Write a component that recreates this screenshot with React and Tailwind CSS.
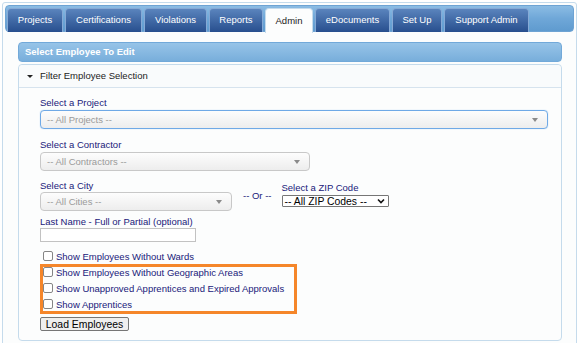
import React from 'react';

const tabs = [
  { label: 'Projects', w: 'w-[56px]' },
  { label: 'Certifications', w: 'w-[77px]' },
  { label: 'Violations', w: 'w-[63px]' },
  { label: 'Reports', w: 'w-[54px]' },
  { label: 'Admin', w: 'w-[48px]', active: true },
  { label: 'eDocuments', w: 'w-[75px]' },
  { label: 'Set Up', w: 'w-[50px]' },
  { label: 'Support Admin', w: 'w-[85px]' },
];

const Arrow = () => (
  <span className="w-0 h-0 border-l-[3px] border-r-[3px] border-t-[4px] border-l-transparent border-r-transparent border-t-[#8a8a8a]" />
);

const MenuSelect = ({ text, w, focused }) => (
  <div
    className={`${w} h-[19px] flex items-center justify-between pl-[6px] pr-[9px] rounded-[4px] border bg-linear-to-b from-[#fdfdfd] to-[#ededed] ${
      focused ? 'border-[#6fa9e6] shadow-[0_0_1px_#8cbcef]' : 'border-[#c8c8c8]'
    }`}
  >
    <span className="text-[9.5px] leading-[11px] text-[#9a9a9a]">{text}</span>
    <Arrow />
  </div>
);

const Label = ({ children, className = '' }) => (
  <div className={`text-[9.5px] leading-[11px] text-[#20207a] ${className}`}>{children}</div>
);

const CheckRow = ({ text }) => (
  <div className="h-[16px] flex items-center">
    <span className="ml-[3px] w-[10px] h-[10px] border border-[#858585] rounded-[2px] bg-white" />
    <span className="ml-[3px] text-[9.5px] leading-[11px] text-[#20207a]">{text}</span>
  </div>
);

export default function App() {
  return (
    <div className="w-[578px] h-[343px] overflow-hidden bg-white font-['Liberation_Sans',Arial,sans-serif]">
      <div className="ml-[2px] mt-[2px] w-[575px] h-[345px] border border-[#c5dbec] rounded-[3px] p-[2px] bg-[#fcfdfd]">
        {/* tab bar */}
        <div className="h-[27px] flex items-end gap-[2px] pl-[1px] border border-[#6ea3d3] rounded-[4px] bg-linear-to-b from-[#8bbce4] via-[#6fa7d8] to-[#5f9bcf]">
          {tabs.map((t) =>
            t.active ? (
              <div
                key={t.label}
                className={`${t.w} h-[25px] mb-[-2px] flex items-center justify-center rounded-t-[4px] border border-b-0 border-[#c5dbec] bg-[#fcfdfd] text-[9.5px] text-[#222]`}
              >
                {t.label}
              </div>
            ) : (
              <div
                key={t.label}
                className={`${t.w} h-[24px] mb-[-1px] flex items-center justify-center rounded-t-[4px] border border-b-0 border-[#86aad6] bg-linear-to-b from-[#5a84bd] to-[#284f8e] text-[9.5px] text-white`}
              >
                {t.label}
              </div>
            )
          )}
        </div>

        {/* panel */}
        <div className="pl-[13px] pr-[12px] pt-[10px]">
          <div className="h-[20px] flex items-center pl-[6px] rounded-[4px] border border-[#72a9d9] bg-linear-to-b from-[#97c4e8] to-[#78aedb] text-[9.5px] font-bold text-white">
            Select Employee To Edit
          </div>

          <div className="mt-[2px] h-[277px] border border-[#c5dbec] rounded-[4px] bg-[#fcfdfd]">
            <div className="h-[23px] flex items-center pl-[8px] border-b border-[#d6e3ee] bg-[#f9fbfc] rounded-t-[4px]">
              <span className="w-0 h-0 border-l-[3px] border-r-[3px] border-t-[3px] border-l-transparent border-r-transparent border-t-[#222]" />
              <span className="ml-[7px] text-[9.5px] text-[#222]">Filter Employee Selection</span>
            </div>

            <div className="pl-[21px]">
              <Label className="mt-[9px]">Select a Project</Label>
              <div className="mt-[2px]">
                <MenuSelect text="-- All Projects --" w="w-[508px]" focused />
              </div>

              <Label className="mt-[10px]">Select a Contractor</Label>
              <div className="mt-[2px]">
                <MenuSelect text="-- All Contractors --" w="w-[270px]" />
              </div>

              <div className="mt-[9px] flex items-start">
                <div>
                  <Label>Select a City</Label>
                  <div className="mt-[1px]">
                    <MenuSelect text="-- All Cities --" w="w-[192px]" />
                  </div>
                </div>
                <Label className="ml-[11px] mt-[10px]">-- Or --</Label>
                <div className="ml-[10px]">
                  <Label className="mt-[2px]">Select a ZIP Code</Label>
                  <div className="mt-[2px] w-[107px] h-[12px] flex items-center justify-between pl-[2px] pr-[3px] border border-[#767676] rounded-[1px] bg-white">
                    <span className="text-[10.4px] leading-[11px] text-black">-- All ZIP Codes --</span>
                    <svg width="8" height="6" viewBox="0 0 8 6">
                      <path d="M1 1.5 L4 4.5 L7 1.5" fill="none" stroke="#111" strokeWidth="1.6" />
                    </svg>
                  </div>
                </div>
              </div>

              <Label className="mt-[5px]">Last Name - Full or Partial (optional)</Label>
              <div className="mt-[1px] w-[156px] h-[14px] border border-[#c2c2c2] bg-white" />

              <div className="relative mt-[6px]">
                <CheckRow text="Show Employees Without Wards" />
                <CheckRow text="Show Employees Without Geographic Areas" />
                <CheckRow text="Show Unapproved Apprentices and Expired Approvals" />
                <CheckRow text="Show Apprentices" />
                <div className="absolute left-0 top-[16px] w-[257px] h-[50px] border-[3px] border-[#f5862a]" />
              </div>

              <button className="mt-[5px] h-[14px] w-[89px] flex items-center justify-center border border-[#767676] rounded-[2px] bg-[#efefef] text-[10.4px] leading-[11px] text-black">
                Load Employees
              </button>
            </div>
          </div>
        </div>
      </div>
    </div>
  );
}
